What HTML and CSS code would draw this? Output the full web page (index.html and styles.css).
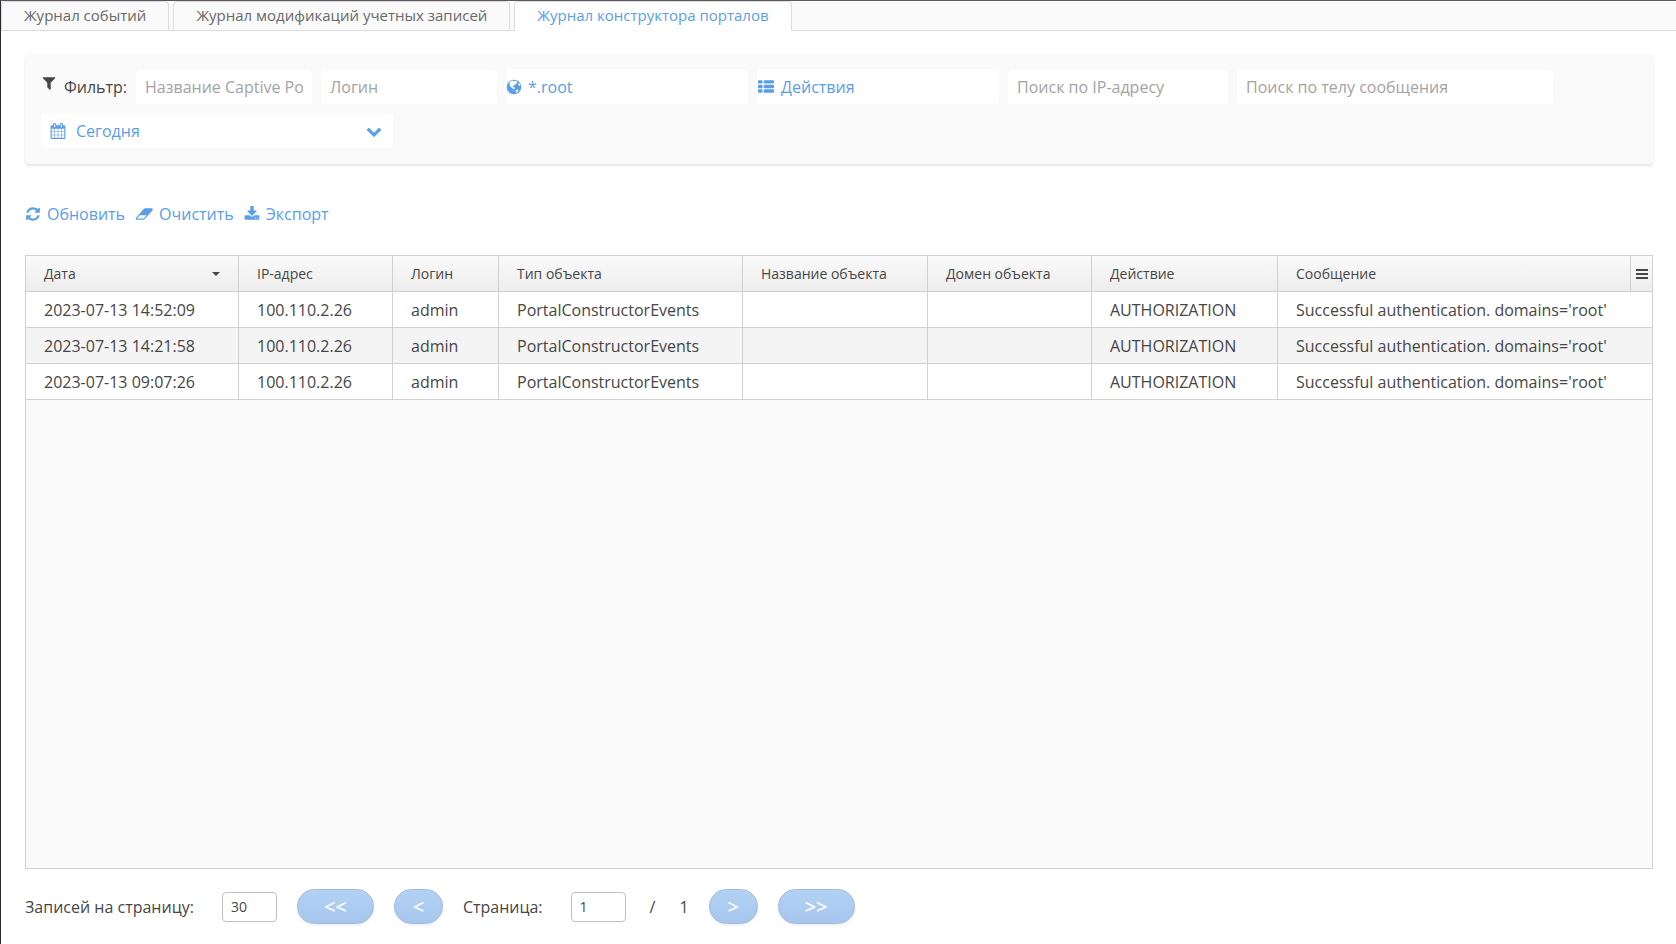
FILE: index.html
```html
<!DOCTYPE html>
<html lang="ru">
<head>
    <meta charset="UTF-8">
    <meta name="viewport" content="width=device-width, initial-scale=1.0">
    <title>Журнал конструктора порталов</title>
    <link rel="stylesheet" href="styles.css">
</head>
<body>
    <div class="page">
        <nav class="tabs">
            <a href="#" class="tab">Журнал событий</a>
            <a href="#" class="tab">Журнал модификаций учетных записей</a>
            <a href="#" class="tab active">Журнал конструктора порталов</a>
        </nav>

        <main class="content">
            <form class="filter">
                <div class="filter-label">
                    <svg class="icon" viewBox="0 0 1792 1792"><path d="M1595 295q17 41-14 70l-493 493v742q0 42-39 59-13 5-25 5-27 0-45-19l-256-256q-19-19-19-45v-486l-493-493q-31-29-14-70 17-39 59-39h1280q42 0 59 39z"/></svg>
                    <span>Фильтр:</span>
                </div>
                <input type="text" class="field" placeholder="Название Captive Portal" aria-label="Название Captive Portal">
                <input type="text" class="field" placeholder="Логин" aria-label="Логин">
                <button type="button" class="picker">
                    <svg class="icon" viewBox="0 0 16 16"><circle cx="8" cy="8" r="7.3"/><path class="land" d="M3.4 3 6.4 1.6 8 2.2 9.6 1.6 11.2 2.8 10.8 4.4 9 5.4 8.2 6.6 6.6 7 7.4 8.2 9.2 8.6 8 10.6 6 9 4.2 7.2 3.6 5zM11.8 4.6 13.6 4.4 14.4 6.6 12.8 6.8zM9.4 11.4 12 10.6 12.4 12 10.4 14z"/></svg>
                    <span>*.root</span>
                </button>
                <button type="button" class="picker">
                    <svg class="icon icon-wide" viewBox="0 0 1792 1792"><path d="M512 1248v192q0 40-28 68t-68 28h-320q-40 0-68-28t-28-68v-192q0-40 28-68t68-28h320q40 0 68 28t28 68zM512 736v192q0 40-28 68t-68 28h-320q-40 0-68-28t-28-68v-192q0-40 28-68t68-28h320q40 0 68 28t28 68zM1792 1248v192q0 40-28 68t-68 28h-960q-40 0-68-28t-28-68v-192q0-40 28-68t68-28h960q40 0 68 28t28 68zM512 224v192q0 40-28 68t-68 28h-320q-40 0-68-28t-28-68v-192q0-40 28-68t68-28h320q40 0 68 28t28 68zM1792 736v192q0 40-28 68t-68 28h-960q-40 0-68-28t-28-68v-192q0-40 28-68t68-28h960q40 0 68 28t28 68zM1792 224v192q0 40-28 68t-68 28h-960q-40 0-68-28t-28-68v-192q0-40 28-68t68-28h960q40 0 68 28t28 68z"/></svg>
                    <span>Действия</span>
                </button>
                <input type="text" class="field field-ip" placeholder="Поиск по IP-адресу" aria-label="Поиск по IP-адресу">
                <input type="text" class="field field-message" placeholder="Поиск по телу сообщения" aria-label="Поиск по телу сообщения">
                <div class="period">
                    <svg class="icon" viewBox="0 0 1792 1792"><path d="M192 1664h288v-288h-288v288zm352 0h320v-288h-320v288zm-352-352h288v-320h-288v320zm352 0h320v-320h-320v320zm-352-384h288v-288h-288v288zm736 736h320v-288h-320v288zm-384-736h320v-288h-320v288zm768 736h288v-288h-288v288zm-384-352h320v-320h-320v320zm-352-864v-288q0-13-9.5-22.5t-22.5-9.5h-64q-13 0-22.5 9.5t-9.5 22.5v288q0 13 9.5 22.5t22.5 9.5h64q13 0 22.5-9.5t9.5-22.5zm736 864h288v-320h-288v320zm-384-384h320v-288h-320v288zm384 0h288v-288h-288v288zm32-480v-288q0-13-9.5-22.5t-22.5-9.5h-64q-13 0-22.5 9.5t-9.5 22.5v288q0 13 9.5 22.5t22.5 9.5h64q13 0 22.5-9.5t9.5-22.5zm384-64v1280q0 52-38 90t-90 38h-1408q-52 0-90-38t-38-90v-1280q0-52 38-90t90-38h128v-96q0-66 47-113t113-47h64q66 0 113 47t47 113v96h384v-96q0-66 47-113t113-47h64q66 0 113 47t47 113v96h128q52 0 90 38t38 90z"/></svg>
                    <select aria-label="Период">
                        <option>Сегодня</option>
                    </select>
                    <svg class="icon" viewBox="0 0 1792 1792"><path d="M1683 808l-742 741q-19 19-45 19t-45-19l-742-741q-19-19-19-45.5t19-45.5l166-165q19-19 45-19t45 19l531 531 531-531q19-19 45-19t45 19l166 165q19 19 19 45.5t-19 45.5z"/></svg>
                </div>
            </form>

            <div class="toolbar">
                <button type="button">
                    <svg class="icon" viewBox="64 0 1664 1792"><path d="M1639 1056q0 5-1 7-64 268-268 434.5t-478 166.5q-146 0-282.5-55t-243.5-157l-129 129q-19 19-45 19t-45-19-19-45v-448q0-26 19-45t45-19h448q26 0 45 19t19 45-19 45l-137 137q71 66 161 102t187 36q134 0 250-65t186-179q11-17 53-117 8-23 30-23h192q13 0 22.5 9.5t9.5 22.5zm25-800v448q0 26-19 45t-45 19h-448q-26 0-45-19t-19-45 19-45l138-138q-148-137-349-137-134 0-250 65t-186 179q-11 17-53 117-8 23-30 23h-199q-13 0-22.5-9.5t-9.5-22.5v-7q65-268 270-434.5t480-166.5q146 0 284 55.5t245 156.5l130-129q19-19 45-19t45 19 19 45z"/></svg>
                    <span>Обновить</span>
                </button>
                <button type="button">
                    <svg class="icon icon-wide" viewBox="0 0 1984 1792"><path d="M960 1408l336-384h-768l-336 384h768zm1013-1077q15 34 9.5 71.5t-30.5 65.5l-896 1024q-38 44-96 44h-768q-38 0-69.5-20.5t-47.5-54.5q-15-34-9.5-71.5t30.5-65.5l896-1024q38-44 96-44h768q38 0 69.5 20.5t47.5 54.5z"/></svg>
                    <span>Очистить</span>
                </button>
                <button type="button">
                    <svg class="icon" viewBox="64 0 1664 1792"><path d="M1344 1344q0-26-19-45t-45-19-45 19-19 45 19 45 45 19 45-19 19-45zm256 0q0-26-19-45t-45-19-45 19-19 45 19 45 45 19 45-19 19-45zm128-224v320q0 40-28 68t-68 28h-1472q-40 0-68-28t-28-68v-320q0-40 28-68t68-28h465l135 136q58 56 136 56t136-56l136-136h464q40 0 68 28t28 68zm-325-569q17 41-14 70l-448 448q-18 19-45 19t-45-19l-448-448q-31-29-14-70 17-39 59-39h256v-448q0-26 19-45t45-19h256q26 0 45 19t19 45v448h256q42 0 59 39z"/></svg>
                    <span>Экспорт</span>
                </button>
            </div>

            <div class="grid">
                <table>
                    <colgroup>
                        <col class="col-date">
                        <col class="col-ip">
                        <col class="col-login">
                        <col class="col-type">
                        <col class="col-name">
                        <col class="col-domain">
                        <col class="col-action">
                        <col>
                        <col class="col-menu">
                    </colgroup>
                    <thead>
                        <tr>
                            <th>
                                <div class="sorted">
                                    <span>Дата</span>
                                    <svg class="sort-arrow" viewBox="0 0 8 4"><path d="M0 0h8L4 4z"/></svg>
                                </div>
                            </th>
                            <th>IP-адрес</th>
                            <th>Логин</th>
                            <th>Тип объекта</th>
                            <th>Название объекта</th>
                            <th>Домен объекта</th>
                            <th>Действие</th>
                            <th>Сообщение</th>
                            <th class="menu-cell">
                                <button type="button" class="menu-button" aria-label="Столбцы">
                                    <svg viewBox="0 0 12 10"><path d="M0 0h12v2H0zM0 4h12v2H0zM0 8h12v2H0z"/></svg>
                                </button>
                            </th>
                        </tr>
                    </thead>
                    <tbody>
                        <tr>
                            <td>2023-07-13 14:52:09</td>
                            <td>100.110.2.26</td>
                            <td>admin</td>
                            <td>PortalConstructorEvents</td>
                            <td></td>
                            <td></td>
                            <td>AUTHORIZATION</td>
                            <td colspan="2">Successful authentication. domains='root'</td>
                        </tr>
                        <tr>
                            <td>2023-07-13 14:21:58</td>
                            <td>100.110.2.26</td>
                            <td>admin</td>
                            <td>PortalConstructorEvents</td>
                            <td></td>
                            <td></td>
                            <td>AUTHORIZATION</td>
                            <td colspan="2">Successful authentication. domains='root'</td>
                        </tr>
                        <tr>
                            <td>2023-07-13 09:07:26</td>
                            <td>100.110.2.26</td>
                            <td>admin</td>
                            <td>PortalConstructorEvents</td>
                            <td></td>
                            <td></td>
                            <td>AUTHORIZATION</td>
                            <td colspan="2">Successful authentication. domains='root'</td>
                        </tr>
                    </tbody>
                </table>
            </div>

            <div class="pager">
                <label for="pageSize">Записей на страницу:</label>
                <input type="text" id="pageSize" value="30">
                <button type="button" class="wide">&lt;&lt;</button>
                <button type="button">&lt;</button>
                <label for="pageNumber">Страница:</label>
                <input type="text" id="pageNumber" value="1">
                <span>/</span>
                <span>1</span>
                <button type="button">&gt;</button>
                <button type="button" class="wide">&gt;&gt;</button>
            </div>
        </main>
    </div>
</body>
</html>
```
FILE: styles.css
```css
* {
    box-sizing: border-box;
}

body {
    margin: 0;
    background-color: #fff;
    color: #464646;
    font-family: "Open Sans", sans-serif;
    font-size: 16px;
    line-height: 24px;
}

button, input, select {
    margin: 0;
    font: inherit;
}

.page {
    display: flex;
    flex-direction: column;
    min-height: 100vh;
    border-top: 1px solid #5d5860;
    border-left: 1px solid #2c2a30;
}

/* Tabs */
.tabs {
    display: flex;
    gap: 4px;
    height: 30px;
    background-color: #fafafa;
    box-shadow: inset 0 -1px 0 #dcdcdc;
}

.tab {
    padding: 0 22px;
    border: 1px solid #dcdcdc;
    border-radius: 4px 4px 0 0;
    color: #696969;
    font-size: 15px;
    line-height: 26px;
    text-decoration: none;
    white-space: nowrap;
}

    .tab.active {
        background-color: #fff;
        border-bottom-color: #fff;
        color: #5a9ee9;
    }

.content {
    display: flex;
    flex: 1;
    flex-direction: column;
    padding: 23px 23px 20px 24px;
}

.icon {
    flex: none;
    width: 16px;
    height: 16px;
    fill: currentColor;
}

.icon-wide {
    width: 18px;
}

.land {
    fill: #fff;
}

/* Filter */
.filter {
    display: flex;
    flex-wrap: wrap;
    align-items: flex-end;
    gap: 9px;
    padding: 15px 16px 16px;
    border-radius: 4px;
    background-color: #fafafa;
    box-shadow: 0 2px 3px rgba(0, 0, 0, 0.1);
}

.filter-label {
    display: flex;
    gap: 7px;
    height: 35px;
    line-height: 36px;
}

    .filter-label .icon {
        margin-top: 6px;
    }

.field {
    width: 176px;
    height: 34px;
    padding: 0 9px;
    border: none;
    border-radius: 4px;
    background-color: #fff;
    color: #464646;
}

    .field::placeholder {
        color: #a3a3a3;
        opacity: 1;
    }

.field-ip {
    width: 220px;
}

.field-message {
    width: 316px;
}

.picker {
    display: flex;
    align-items: center;
    gap: 6px;
    width: 242px;
    height: 35px;
    padding: 0;
    border: none;
    border-radius: 4px;
    background-color: #fff;
    color: #5a9ee9;
}

.period {
    display: flex;
    align-items: center;
    gap: 6px;
    width: 352px;
    height: 35px;
    padding: 0 11px 0 9px;
    border-radius: 4px;
    background-color: #fff;
    color: #5a9ee9;
}

    .period select {
        flex: 1;
        padding: 0 4px;
        border: none;
        background: transparent;
        color: inherit;
        appearance: none;
    }

/* Toolbar */
.toolbar {
    display: flex;
    gap: 10px;
    margin: 38px 0 29px;
}

    .toolbar button {
        display: flex;
        align-items: center;
        gap: 6px;
        padding: 0;
        border: none;
        background: none;
        color: #5a9ee9;
    }

/* Table */
.grid {
    flex: 1;
    border: 1px solid #d0d0d0;
    background-color: #fafafa;
}

table {
    width: 100%;
    table-layout: fixed;
    border-collapse: separate;
    border-spacing: 0;
}

th, td {
    height: 36px;
    padding: 0 18px;
    border-right: 1px solid #d0d0d0;
    border-bottom: 1px solid #d0d0d0;
    text-align: left;
    white-space: nowrap;
    overflow: hidden;
}

th {
    background: linear-gradient(#fafafa, #ededed);
    font-size: 14px;
    font-weight: normal;
}

td {
    background-color: #fff;
}

tr:nth-child(even) td {
    background-color: #f4f4f4;
}

th:last-child, td:last-child {
    border-right: none;
}

.col-date { width: 213px; }
.col-ip { width: 154px; }
.col-login { width: 106px; }
.col-type { width: 244px; }
.col-name { width: 185px; }
.col-domain { width: 164px; }
.col-action { width: 186px; }
.col-menu { width: 21px; }

.sorted {
    display: flex;
    align-items: center;
    justify-content: space-between;
}

.sort-arrow {
    width: 8px;
    height: 4px;
    fill: #464646;
}

th.menu-cell {
    padding: 0;
}

.menu-button {
    display: flex;
    align-items: center;
    justify-content: center;
    width: 100%;
    height: 35px;
    padding: 0;
    border: none;
    background: none;
}

    .menu-button svg {
        width: 12px;
        height: 10px;
        fill: #464646;
    }

/* Pager */
.pager {
    display: flex;
    align-items: center;
    gap: 20px;
    margin-top: 20px;
}

    .pager input {
        width: 55px;
        height: 30px;
        margin-left: 8px;
        padding: 0 8px;
        border: 1px solid #c0c0c0;
        border-radius: 4px;
        color: #464646;
        font-size: 14px;
    }

    .pager span {
        margin-left: 4px;
    }

    .pager button {
        width: 49px;
        height: 35px;
        padding: 0;
        border: 1px solid #a3bbd9;
        border-radius: 18px;
        background: linear-gradient(#b2d2f4, #a7c6ee);
        box-shadow: 0 2px 3px rgba(0, 0, 0, 0.05);
        color: #fff;
        font-size: 20px;
        font-weight: 600;
    }

    .pager button.wide {
        width: 77px;
    }
```
